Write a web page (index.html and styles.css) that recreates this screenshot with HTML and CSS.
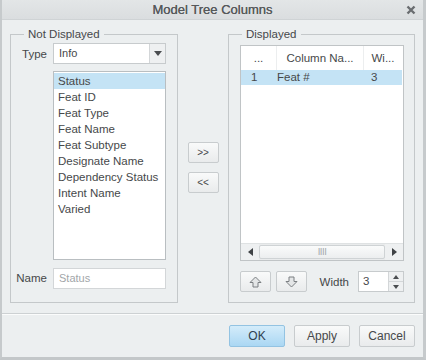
FILE: index.html
```html
<!DOCTYPE html>
<html lang="en">
	<head>
		<meta charset="UTF-8">
		<title>Model Tree Columns</title>
		<link rel="stylesheet" href="styles.css">
	</head>
	<body>

		<div class="window">

			<div class="titlebar">
				<span class="title">Model Tree Columns</span>
				<svg class="close" width="10" height="10" viewBox="0 0 10 10"><path d="M1.5 1.5 L8.5 8.5 M8.5 1.5 L1.5 8.5" stroke="#6a6d70" stroke-width="2.4"/></svg>
			</div>

			<div class="content">

				<!-- left group -->
				<fieldset class="group group-left">
					<legend>Not Displayed</legend>
					<div class="form-grid">
						<label class="lbl">Type</label>
						<div class="select">
							<span class="select-text">Info</span>
							<span class="select-btn"><span class="tri-down"></span></span>
						</div>

						<span></span>
						<ul class="list">
							<li class="selected">Status</li>
							<li>Feat ID</li>
							<li>Feat Type</li>
							<li>Feat Name</li>
							<li>Feat Subtype</li>
							<li>Designate Name</li>
							<li>Dependency Status</li>
							<li>Intent Name</li>
							<li>Varied</li>
						</ul>

						<label class="lbl">Name</label>
						<div class="input placeholder">Status</div>
					</div>
				</fieldset>

				<!-- move buttons -->
				<div class="middle">
					<button class="btn btn-small">&gt;&gt;</button>
					<button class="btn btn-small">&lt;&lt;</button>
				</div>

				<!-- right group -->
				<fieldset class="group group-right">
					<legend>Displayed</legend>

					<div class="tbl">
						<div class="tbl-head">
							<span class="c1">...</span>
							<span class="c2">Column Na...</span>
							<span class="c3">Wi...</span>
						</div>
						<div class="tbl-row selected">
							<span class="c1">1</span>
							<span class="c2">Feat #</span>
							<span class="c3">3</span>
						</div>
						<div class="tbl-fill"></div>
						<div class="hscroll">
							<span class="sb-btn"><span class="tri-left"></span></span>
							<span class="sb-track"><span class="sb-thumb">IIII</span></span>
							<span class="sb-btn"><span class="tri-right"></span></span>
						</div>
					</div>

					<div class="tools">
						<button class="btn btn-small">
							<svg width="13" height="12" viewBox="0 0 13 12"><path d="M6.5 1 L12 6.5 L9 6.5 L9 11 L4 11 L4 6.5 L1 6.5 Z" fill="#e4e6e7" stroke="#7b7f82" stroke-width="1"/></svg>
						</button>
						<button class="btn btn-small btn-down">
							<svg width="13" height="12" viewBox="0 0 13 12"><path d="M6.5 11 L12 5.5 L9 5.5 L9 1 L4 1 L4 5.5 L1 5.5 Z" fill="#e4e6e7" stroke="#7b7f82" stroke-width="1"/></svg>
						</button>
						<span class="width-lbl">Width</span>
						<div class="spin">
							<span class="spin-val">3</span>
							<span class="spin-btns">
								<span class="spin-up"><span class="tri-up-s"></span></span>
								<span class="spin-down"><span class="tri-down-s"></span></span>
							</span>
						</div>
					</div>
				</fieldset>

			</div>

			<div class="footer">
				<button class="btn btn-big btn-ok">OK</button>
				<button class="btn btn-big">Apply</button>
				<button class="btn btn-big">Cancel</button>
			</div>

		</div>

	</body>
</html>
```

FILE: styles.css
```css
/* all */
* {
	margin: 0;
	padding: 0;
	box-sizing: border-box;
}

body {
	font-family: "Liberation Sans", Arial, sans-serif;
	font-size: 11px;
	color: #46484a;
	background: #c9cdcf;
}

.window {
	width: 426px;
	height: 360px;
	background: #eceff0;
	border-left: 2px solid #c6cacc;
	border-right: 3px solid #c6cacc;
	border-bottom: 3px solid #c3c7c9;
	display: flex;
	flex-direction: column;
}

/* title bar */
.titlebar {
	height: 20px;
	background: linear-gradient(#e3e6e7, #dadddf);
	border-bottom: 1px solid #cfd3d5;
	display: flex;
	align-items: center;
	justify-content: center;
	position: relative;
}

.title {
	font-size: 13px;
	color: #56595b;
	text-shadow: 0 0 0.3px #56595b;
}

.close {
	position: absolute;
	right: 7px;
	top: 5px;
}

/* main area */
.content {
	display: flex;
	padding: 7px 8px 0 8px;
}

.group {
	border: 1px solid #c4c8ca;
	font-size: 11px;
	min-width: 0;
	flex: none;
}

.group legend {
	line-height: 14px;
	padding: 0 4px;
	margin-left: 8px;
	font-size: 11.5px;
}

.group-left {
	width: 168px;
	padding: 2px 11px 12px 5px;
}

.group-right {
	width: 187px;
	padding: 4px 10px 10px 11px;
}

.group-right legend {
	margin-left: 2px;
}

.form-grid {
	display: grid;
	grid-template-columns: 31px 113px;
	grid-template-rows: 21px 189px 21px;
	column-gap: 6px;
	row-gap: 7px;
	align-items: center;
}

.form-grid .input {
	margin-top: 2px;
}

.lbl {
	text-align: right;
	font-size: 11.5px;
}

/* dropdown */
.select {
	height: 21px;
	background: #fff;
	border: 1px solid #c7cbcd;
	display: flex;
}

.select-text {
	flex: 1;
	padding-left: 5px;
	line-height: 19px;
}

.select-btn {
	width: 16px;
	background: #eef0f1;
	border-left: 1px solid #d3d6d8;
	display: flex;
	align-items: center;
	justify-content: center;
}

.tri-down {
	border-left: 4px solid transparent;
	border-right: 4px solid transparent;
	border-top: 5px solid #4a4d50;
}

/* list */
.list {
	height: 189px;
	list-style: none;
	background: #fff;
	border: 1px solid #b9bec1;
	padding-top: 1px;
	align-self: start;
}

.list li {
	height: 16px;
	line-height: 16px;
	padding-left: 4px;
	font-size: 11.5px;
}

.list li.selected {
	background: #c4e3f5;
}

.input {
	height: 21px;
	background: #fff;
	border: 1px solid #d3d6d8;
	padding-left: 5px;
	line-height: 19px;
}

.placeholder {
	color: #a2a6a9;
}

/* middle buttons */
.middle {
	width: 50px;
	flex: none;
	display: flex;
	flex-direction: column;
	align-items: center;
	padding-top: 115px;
	gap: 9px;
}

.btn {
	font-family: "Liberation Sans", Arial, sans-serif;
	background: linear-gradient(#f9fafa, #e9ebec);
	border: 1px solid #c8ccce;
	border-radius: 2px;
	color: #46484a;
	display: flex;
	align-items: center;
	justify-content: center;
	flex: none;
}

.btn-small {
	width: 31px;
	height: 21px;
	font-size: 10px;
}

/* table */
.tbl {
	height: 216px;
	width: 164px;
	background: #fff;
	border: 1px solid #c0c4c6;
	display: flex;
	flex-direction: column;
}

.tbl-head,
.tbl-row {
	display: flex;
	margin-right: 1px;
	font-size: 11.5px;
}

.tbl-head {
	height: 24px;
	align-items: center;
}

.tbl-head span {
	text-align: center;
	line-height: 24px;
	border-right: 1px solid #eceeef;
}

.tbl-head span:last-child {
	border-right: none;
}

.c1 {
	width: 36px;
}

.c2 {
	width: 87px;
}

.c3 {
	width: 38px;
}

.tbl-row {
	height: 15px;
	line-height: 15px;
}

.tbl-row.selected {
	background: #c4e3f5;
}

.tbl-row .c1 {
	padding-left: 10px;
}

.tbl-row .c3 {
	padding-left: 7px;
}

.tbl-fill {
	flex: 1;
}

/* horizontal scrollbar */
.hscroll {
	height: 17px;
	display: flex;
	background: #e9ebec;
	border-top: 1px solid #dfe2e3;
}

.sb-btn {
	width: 18px;
	display: flex;
	align-items: center;
	justify-content: center;
	background: #eef0f1;
}

.sb-track {
	flex: 1;
	padding: 1px 0;
	display: flex;
}

.sb-thumb {
	flex: 1;
	background: linear-gradient(#fafbfb, #eceeef);
	border: 1px solid #cfd3d5;
	border-radius: 2px;
	font-family: "DejaVu Sans", sans-serif;
	font-size: 9px;
	color: #a3a7aa;
	text-align: center;
	line-height: 13px;
	letter-spacing: -0.5px;
}

.tri-left {
	border-top: 4px solid transparent;
	border-bottom: 4px solid transparent;
	border-right: 5px solid #3f4245;
}

.tri-right {
	border-top: 4px solid transparent;
	border-bottom: 4px solid transparent;
	border-left: 5px solid #3f4245;
}

/* tools row */
.tools {
	display: flex;
	align-items: center;
	margin-top: 10px;
	height: 21px;
	width: 164px;
}

.btn-down {
	margin-left: 5px;
}

.width-lbl {
	margin-left: auto;
	font-size: 11.5px;
}

.spin {
	margin-left: 9px;
	width: 46px;
	height: 21px;
	background: #fff;
	border: 1px solid #c7cbcd;
	display: flex;
	flex: none;
}

.spin-val {
	flex: 1;
	padding-left: 4px;
	line-height: 19px;
	font-size: 11.5px;
}

.spin-btns {
	width: 15px;
	display: flex;
	flex-direction: column;
	background: #eef0f1;
	border-left: 1px solid #d3d6d8;
}

.spin-up,
.spin-down {
	flex: 1;
	display: flex;
	align-items: center;
	justify-content: center;
}

.spin-up {
	border-bottom: 1px solid #d3d6d8;
}

.tri-up-s {
	border-left: 3px solid transparent;
	border-right: 3px solid transparent;
	border-bottom: 4px solid #4a4d50;
}

.tri-down-s {
	border-left: 3px solid transparent;
	border-right: 3px solid transparent;
	border-top: 4px solid #4a4d50;
}

/* footer */
.footer {
	margin-top: 10px;
	border-top: 1px solid #cdd1d3;
	box-shadow: inset 0 1px 0 #fbfcfc;
	display: flex;
	justify-content: flex-end;
	gap: 9px;
	padding: 11px 8px 10px 0;
}

.btn-big {
	width: 56px;
	height: 22px;
	font-size: 12px;
}

.btn-ok {
	background: linear-gradient(#d4ecfa, #aad7f3);
	border-color: #93c3e2;
	color: #2f4150;
}
```
